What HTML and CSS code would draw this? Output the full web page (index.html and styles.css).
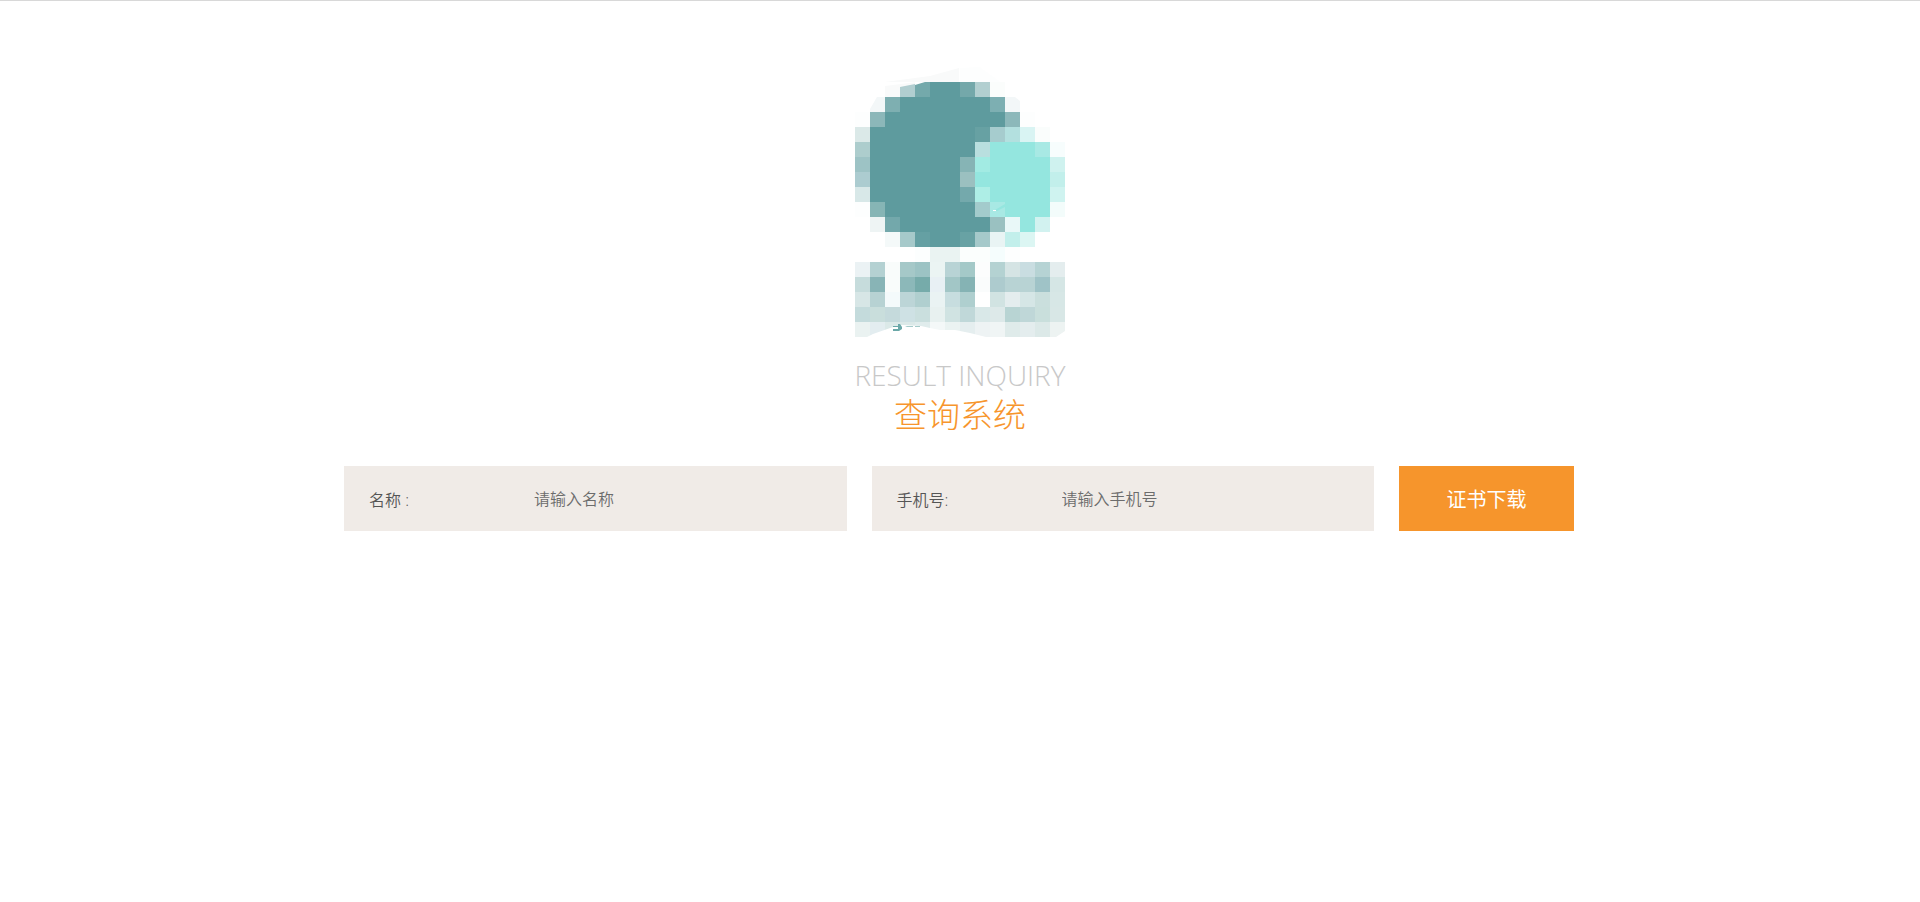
FILE: index.html
```html
<!DOCTYPE html>
<html lang="zh-CN">
<head>
<meta charset="utf-8">
<meta name="viewport" content="width=device-width, initial-scale=1">
<title>查询系统</title>
<link rel="stylesheet" href="styles.css">
</head>
<body>
<main class="page">
  <svg class="logo" viewBox="0 0 210 270" aria-hidden="true">
    <path fill="#f9fafa" d="M30 15 75 9 104 1V15zM30 30V19L62 15H75V30zM15 45 22 30H30V45z"/>
    <path fill="#fdfefe" d="M105 1 124 0 145 15H105z"/>
    <path fill="#f3f7f8" d="M150 30H160L165 34V45H150zM15 45V42L22 30H30V45z"/>
    <g class="cells" transform="scale(15)">
      <path fill="#5e9b9e" d="M5 1h2v1h2v1h1v1h-2v2h-1v3h1v1h1v1h-2v1h-2v-1h-2v-1h-1v-1h-1v-5h1v-1h1v-1h2z"/>
      <path fill="#94e6df" d="M9 5h3v1h1v3h-1v2h-1v-1h-1v-1h-1v-1h-1v-1h1z"/>
      <path fill="#94e6df" d="M12 9h1v1h-1zM8 7h1v1h-1z"/>
      <g transform="translate(0 1)"><rect x="4" fill="#74a9ab"/><rect x="7" fill="#74a8aa"/><rect x="8" fill="#b2cfd0"/><rect x="9" fill="#fbfdfc"/></g>
      <g transform="translate(0 2)"><rect x="2" fill="#7eafb1"/><rect x="9" fill="#7dafb2"/></g>
      <g transform="translate(0 3)"><rect x="0" fill="#fdfefe"/><rect x="1" fill="#8cb7b9"/><rect x="2" fill="#5e9b9e"/><rect x="9" fill="#5e9b9e"/><rect x="10" fill="#8cb8ba"/><rect x="11" fill="#fdfefe"/></g>
      <g transform="translate(0 4)"><rect x="0" fill="#dbe9e8"/><rect x="8" fill="#67a1a3"/><rect x="9" fill="#a6ccce"/><rect x="10" fill="#b3e0df"/><rect x="11" fill="#d9f4f3"/><rect x="12" fill="#fafdfc"/></g>
      <g transform="translate(0 5)"><rect x="0" fill="#adcdcd"/><rect x="7" fill="#5e9b9e"/><rect x="8" fill="#b9dfdf"/><rect x="12" fill="#a8e9e4"/><rect x="13" fill="#f7fdfd"/></g>
      <g transform="translate(0 6)"><rect x="0" fill="#9dc3c5"/><rect x="7" fill="#86b4b5"/><rect x="8" fill="#a2ebe3"/><rect x="13" fill="#cff2ef"/></g>
      <g transform="translate(0 7)"><rect x="0" fill="#acccd0"/><rect x="7" fill="#9bc0c0"/><rect x="13" fill="#c2efeb"/></g>
      <g transform="translate(0 8)"><rect x="0" fill="#d8e8e8"/><rect x="7" fill="#74a9ac"/><rect x="8" fill="#aeeee6"/><rect x="13" fill="#cff3f0"/></g>
      <g transform="translate(0 9)"><rect x="0" fill="#fdfefe"/><rect x="1" fill="#86b5b5"/><rect x="8" fill="#a3cbcc"/><rect x="9" fill="#a8e9e4"/><rect x="13" fill="#f3fcfb"/></g>
      <g transform="translate(0 10)"><rect x="1" fill="#eef4f4"/><rect x="2" fill="#73a8ab"/><rect x="9" fill="#9ac1c1"/><rect x="10" fill="#e9f8f8"/><rect x="12" fill="#d2f2f0"/></g>
      <g transform="translate(0 11)"><rect x="2" fill="#f4f9f9"/><rect x="3" fill="#a6c9ca"/><rect x="4" fill="#65a0a3"/><rect x="7" fill="#68a2a4"/><rect x="8" fill="#a5c9ca"/><rect x="9" fill="#e9f4f4"/><rect x="10" fill="#c2efeb"/><rect x="11" fill="#dcf6f3"/></g>
      <g transform="translate(0 12)"><rect x="4" fill="#fcfefe"/><rect x="5" fill="#eaf3f2"/><rect x="6" fill="#eaf3f2"/><rect x="7" fill="#fbfefd"/><rect x="8" fill="#fbfefd"/><rect x="9" fill="#f5fdfd"/><rect x="10" fill="#fdfefe"/></g>
      <g transform="translate(0 13)"><rect x="0" fill="#ebf2f4"/><rect x="1" fill="#b4d1d2"/><rect x="2" fill="#f9fcfb"/><rect x="3" fill="#a5c8c8"/><rect x="4" fill="#9cc3c4"/><rect x="5" fill="#ebf4f3"/><rect x="6" fill="#b8d3d5"/><rect x="7" fill="#a4c9c8"/><rect x="8" fill="#fcfdfd"/><rect x="9" fill="#b4d2d2"/><rect x="10" fill="#d5e4e4"/><rect x="11" fill="#c9dde1"/><rect x="12" fill="#b6d3d4"/><rect x="13" fill="#e4edee"/></g>
      <g transform="translate(0 14)"><rect x="0" fill="#c6dcdc"/><rect x="1" fill="#88b4b6"/><rect x="2" fill="#f9fcfb"/><rect x="3" fill="#8cb8b9"/><rect x="4" fill="#76abaa"/><rect x="5" fill="#e8f0f4"/><rect x="6" fill="#a2c6c6"/><rect x="7" fill="#85b3b4"/><rect x="8" fill="#fafcfc"/><rect x="9" fill="#adcbce"/><rect x="10" fill="#b8d3d4"/><rect x="11" fill="#b8d3d4"/><rect x="12" fill="#9fc3c7"/><rect x="13" fill="#d5e6e5"/></g>
      <g transform="translate(0 15)"><rect x="0" fill="#d7e6e6"/><rect x="1" fill="#b7d2d3"/><rect x="2" fill="#f4fafb"/><rect x="3" fill="#bcd5d7"/><rect x="4" fill="#b0cfcf"/><rect x="5" fill="#eaf3f3"/><rect x="6" fill="#c7dddf"/><rect x="7" fill="#afcfcf"/><rect x="8" fill="#ffffff"/><rect x="9" fill="#d1e3e2"/><rect x="10" fill="#e4edee"/><rect x="11" fill="#d5e6e6"/><rect x="12" fill="#cadfdd"/><rect x="13" fill="#d7e7e6"/></g>
      <g transform="translate(0 16)"><rect x="0" fill="#c4dbdc"/><rect x="1" fill="#c9dedc"/><rect x="2" fill="#c5dadc"/><rect x="3" fill="#cee1e4"/><rect x="4" fill="#cadfde"/><rect x="5" fill="#e8f1f0"/><rect x="6" fill="#d0e3e2"/><rect x="7" fill="#c0d8d9"/><rect x="8" fill="#d9e8e8"/><rect x="9" fill="#dde9e9"/><rect x="10" fill="#b8d4d3"/><rect x="11" fill="#bfd7d8"/><rect x="12" fill="#c9dfdc"/><rect x="13" fill="#d8e7e6"/></g>
      <g transform="translate(0 17)"><rect x="0" fill="#eaf2f1"/><rect x="1" fill="#e3edf0"/><rect x="2" fill="#dbe9e8"/><rect x="3" fill="#dbe9e8"/><rect x="4" fill="#e0ecec"/><rect x="5" fill="#f4f8f8"/><rect x="6" fill="#ebf3f2"/><rect x="7" fill="#e5eeef"/><rect x="8" fill="#eef3f4"/><rect x="9" fill="#f0f5f5"/><rect x="10" fill="#dfebea"/><rect x="11" fill="#e4edee"/><rect x="12" fill="#dce9e8"/><rect x="13" fill="#edf3f2"/></g>
    </g>
    <path fill="#b1ced0" d="M45 30V20L60 17V30z"/>
    <path fill="#fff" d="M60 15H70L60 18zM12 270 18 267 38 260 47 258 66 259 75 261 85 263 100 263 115 266 131 270zM201 270 210 264V270z"/>
    <path fill="#6aa8a8" d="M43 257H45L47 260V262L44 264H38V262H43V260H38V259H43z"/>
    <path fill="#a5cbca" d="M50 259H58V260H52zM60 259H65V260H60z"/>
    <path fill="#94e6df" d="M140 143 150 137V140L142 144z"/>
    <path fill="#fff" d="M138 143H141V144H138z"/>
  </svg>
  <h1 class="title">
    <span class="title-en">RESULT INQUIRY</span>
    <span class="title-zh">查询系统</span>
  </h1>
  <form class="search">
    <div class="field">
      <label class="field-label" for="name">名称 :</label>
      <input class="field-input" id="name" type="text" placeholder="请输入名称">
    </div>
    <div class="field">
      <label class="field-label" for="phone">手机号:</label>
      <input class="field-input" id="phone" type="tel" placeholder="请输入手机号">
    </div>
    <button class="submit" type="button">证书下载</button>
  </form>
</main>
</body>
</html>
```

FILE: styles.css
```css
* {
  box-sizing: border-box;
}

body {
  margin: 0;
  border-top: 1px solid #d8d8d8;
  background: #fff;
  color: #666;
  font-family: "Open Sans", "Noto Sans CJK SC", sans-serif;
  font-size: 16px;
}

.page {
  display: flex;
  flex-direction: column;
  align-items: center;
  padding: 66px 16px 32px;
}

.logo {
  display: block;
  width: 210px;
  height: auto;
}

.cells {
  shape-rendering: crispEdges;
}

.cells rect {
  width: 1px;
  height: 1px;
}

.title {
  display: flex;
  flex-direction: column;
  align-items: center;
  margin: 18px 0 31px;
  font-weight: 300;
  line-height: 40px;
}

.title-en {
  color: #c8c8c8;
  font-size: 28px;
}

.title-zh {
  color: #f7952c;
  font-size: 33px;
}

.search {
  display: grid;
  grid-template-columns: 1fr 1fr 175px;
  gap: 25px;
  width: 100%;
  max-width: 1232px;
  padding-right: 2px;
}

.field {
  display: flex;
  align-items: center;
  min-width: 0;
  height: 65px;
  padding: 0 25px;
  background: #f0ebe7;
}

.field-label {
  flex: 0 0 165px;
  color: #555;
  font-weight: 350;
}

.field-input {
  flex: 1;
  min-width: 0;
  height: 100%;
  padding: 0;
  border: 0;
  outline: 0;
  background: transparent;
  color: #555;
  font: inherit;
  font-weight: 350;
}

.field-input::placeholder {
  color: #6c6c6c;
}

.submit {
  height: 65px;
  padding: 0;
  border: 0;
  background: #f6952c;
  color: #fff;
  font: inherit;
  font-size: 20px;
  cursor: pointer;
}

@media (max-width: 900px) {
  .search {
    grid-template-columns: 1fr;
    padding-right: 0;
  }
}
```
